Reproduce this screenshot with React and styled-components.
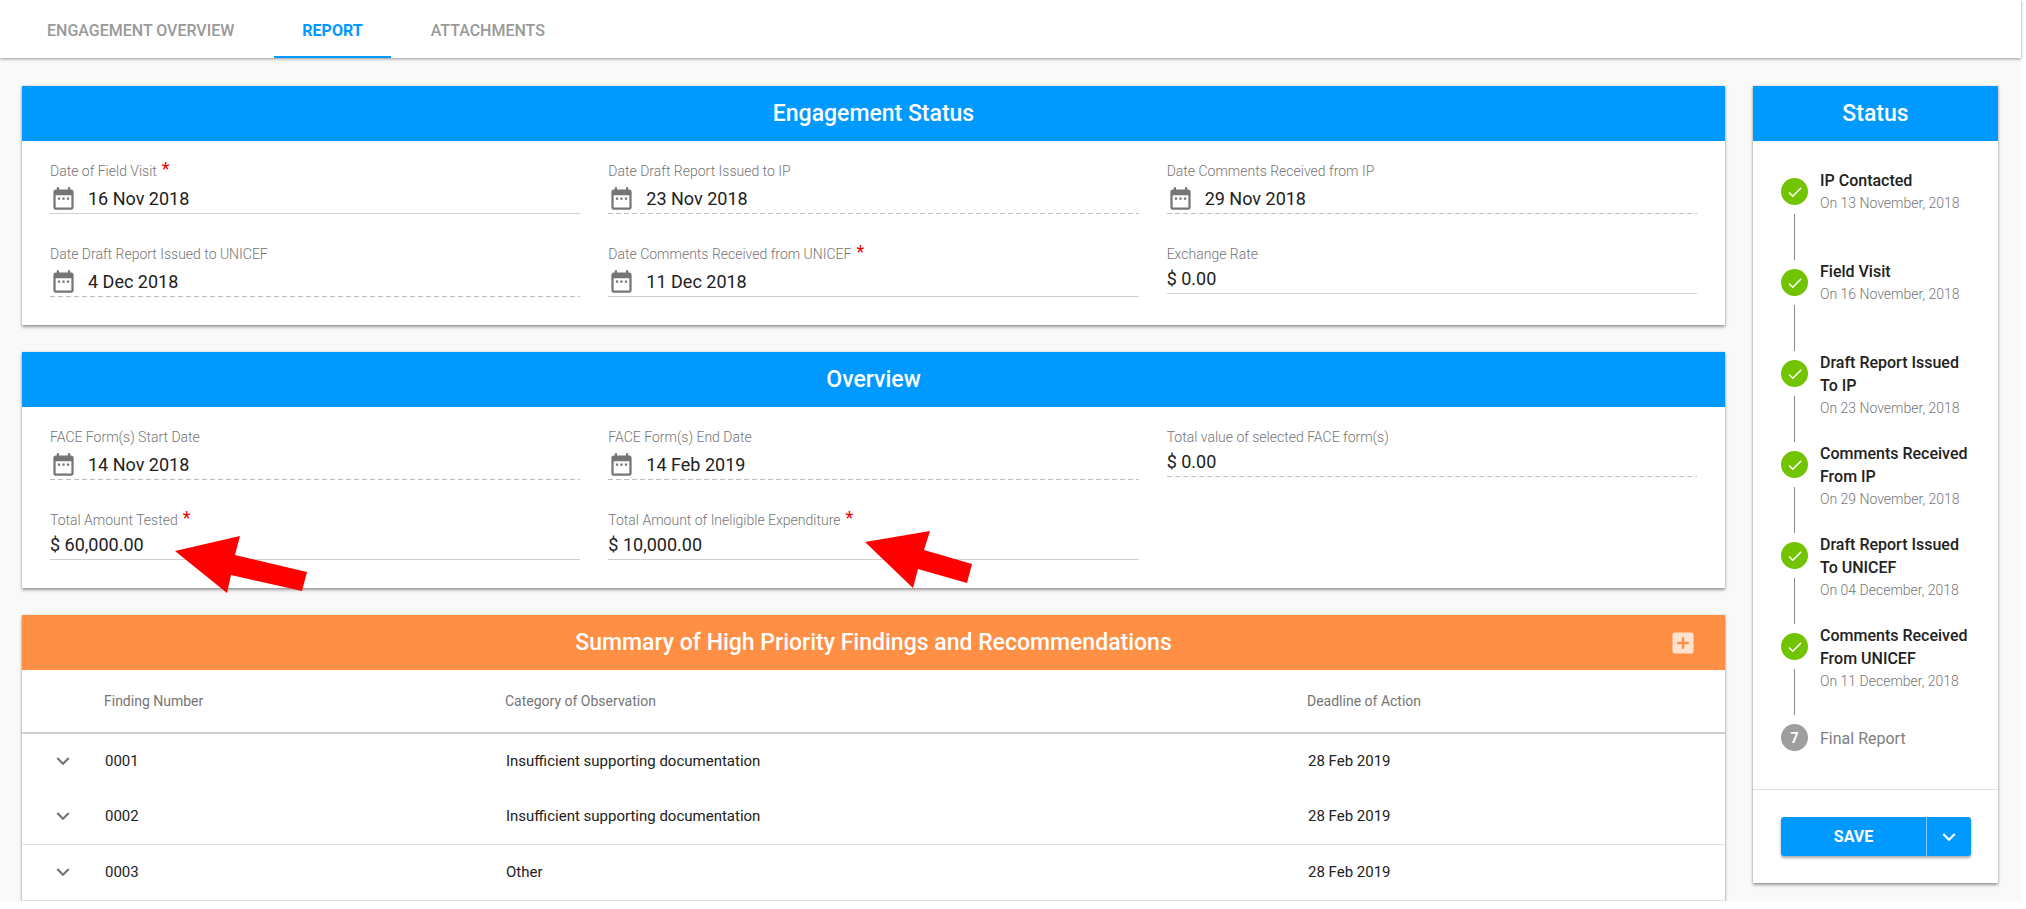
import React from 'react';
import styled, { createGlobalStyle, css } from 'styled-components';
import { MdAddBox, MdCheck, MdDateRange, MdExpandMore } from 'react-icons/md';

const blue = '#0099ff';
const orange = '#ff8f45';
const green = '#72c300';
const ink = '#212121';
const muted = '#757575';
const rule = '#d0d0d0';

const GlobalStyle = createGlobalStyle`
  *, *::before, *::after { box-sizing: border-box; }
  body {
    margin: 0;
    background: #fff;
    color: ${ink};
    font-family: Roboto, "Liberation Sans", sans-serif;
    font-size: 15px;
  }
  button, input { font: inherit; color: inherit; }
`;

const Page = styled.div`
  margin-right: 5px;
  background: #f9f9f9;
`;

const TabBar = styled.nav`
  display: flex;
  gap: 12px;
  height: 58px;
  padding-left: 19px;
  background: #fff;
  box-shadow: 0 1px 3px rgba(0, 0, 0, 0.4);
`;

const Tab = styled.a`
  display: flex;
  align-items: center;
  padding: 4px 28px 0;
  border-bottom: 2px solid ${(p) => (p.$active ? blue : 'transparent')};
  color: ${(p) => (p.$active ? blue : '#999')};
  font-size: 16px;
  font-weight: ${(p) => (p.$active ? 700 : 500)};
  text-decoration: none;
`;

const Content = styled.div`
  display: grid;
  grid-template-columns: minmax(0, 1fr) 245px;
  align-items: start;
  gap: 28px;
  padding: 28px 23px 0 22px;
`;

const Main = styled.main`
  display: flex;
  flex-direction: column;
  gap: 27px;
`;

const Card = styled.section`
  background: #fff;
  box-shadow: 0 2px 3px rgba(0, 0, 0, 0.38), 0 0 2px rgba(0, 0, 0, 0.15);
`;

const CardHeader = styled.header`
  display: grid;
  grid-template-columns: 1fr auto 1fr;
  align-items: center;
  height: 55px;
  padding: 0 28px;
  background: ${(p) => (p.$tone === 'orange' ? orange : blue)};
  color: #fff;
`;

const CardTitle = styled.h2`
  grid-column: 2;
  margin: 0;
  font-size: 23px;
  font-weight: 500;
  line-height: 28px;
`;

const AddButton = styled.button`
  display: flex;
  justify-self: end;
  padding: 0;
  border: 0;
  background: none;
  color: rgba(255, 255, 255, 0.75);
  cursor: pointer;
`;

const FieldGrid = styled.div`
  display: grid;
  grid-template-columns: repeat(3, minmax(0, 1fr));
  align-items: start;
  gap: 30px 28px;
  padding: 20px 28px 28px;
`;

const FieldBox = styled.div`
  position: relative;
`;

const FieldLabel = styled.label`
  display: flex;
  gap: 5px;
  height: 20px;
  color: ${muted};
  font-size: 14px;
  font-weight: 300;
  line-height: 20px;
  white-space: nowrap;
`;

const Required = styled.span`
  color: #e00;
  font-size: 18px;
  font-weight: 400;
  line-height: 16px;
`;

const dashes = css`
  background-image: repeating-linear-gradient(90deg, #bdbdbd 0 5px, transparent 5px 8px);
`;

const FieldValue = styled.div`
  display: flex;
  align-items: center;
  gap: 11px;
  height: ${(p) => (p.$date ? 33 : 30)}px;
  padding-top: ${(p) => (p.$date ? 2 : 0)}px;
  padding-bottom: 1px;
  background: linear-gradient(${rule}, ${rule}) no-repeat left bottom / 100% 1px;
  ${(p) => p.$readOnly && dashes}
  svg { flex: none; color: #757575; }
`;

const Input = styled.input`
  flex: 1;
  min-width: 0;
  height: 28px;
  padding: 0;
  border: 0;
  outline: 0;
  background: none;
  font-size: 18px;
`;

const Pointer = styled.svg`
  position: absolute;
  left: ${(p) => p.$left}px;
  top: ${(p) => p.$top}px;
  fill: #fe0000;
`;

const Table = styled.table`
  width: 100%;
  table-layout: fixed;
  border-collapse: separate;
  border-spacing: 0;
`;

const Th = styled.th`
  width: ${(p) => p.$width || 'auto'};
  height: 64px;
  padding: 0;
  border-bottom: 2px solid ${rule};
  color: #757575;
  font-size: 14px;
  font-weight: 400;
  text-align: left;
`;

const Row = styled.tr`
  td {
    height: ${(p) => (p.$ruled ? 56 : 55)}px;
    padding: 0 0 2px 1px;
    border-bottom: ${(p) => (p.$ruled ? '1px solid #e2e2e2' : '0')};
  }
`;

const ExpandButton = styled.button`
  display: flex;
  margin-left: 27px;
  padding: 0;
  border: 0;
  background: none;
  color: #757575;
  cursor: pointer;
`;

const Steps = styled.ol`
  margin: 0;
  padding: 28px 24px 28px 28px;
  list-style: none;
`;

const Step = styled.li`
  display: flex;
  gap: 12px;
  height: ${(p) => (p.$last ? 46 : 91)}px;
`;

const Marker = styled.div`
  display: flex;
  flex-direction: column;
  align-items: center;
  gap: 9px;
  padding-top: 9px;
`;

const Dot = styled.span`
  display: flex;
  align-items: center;
  justify-content: center;
  width: 27px;
  height: 27px;
  border-radius: 50%;
  background: ${(p) => (p.$done ? green : '#9e9e9e')};
  color: #fff;
  font-size: 14px;
  font-weight: 700;
`;

const Connector = styled.span`
  width: 1px;
  height: 46px;
  background: #888;
`;

const StepText = styled.div`
  align-self: ${(p) => (p.$done ? 'flex-start' : 'center')};
  color: ${(p) => (p.$done ? ink : '#808080')};
  font-size: 16px;
  font-weight: ${(p) => (p.$done ? 500 : 400)};
  line-height: 23px;
`;

const StepDate = styled.div`
  color: ${muted};
  font-size: 14px;
  font-weight: 300;
`;

const Actions = styled.footer`
  padding: 27px 27px 27px 28px;
  border-top: 1px solid #e0e0e0;
`;

const SplitButton = styled.div`
  display: flex;
  height: 39px;
  border-radius: 3px;
  background: ${blue};
  box-shadow: 0 2px 3px rgba(0, 0, 0, 0.35);
`;

const SaveButton = styled.button`
  flex: 1;
  border: 0;
  background: none;
  color: #fff;
  font-size: 16px;
  font-weight: 700;
  cursor: pointer;
`;

const MenuButton = styled.button`
  display: flex;
  align-items: center;
  justify-content: center;
  width: 45px;
  padding: 0;
  border: 0;
  border-left: 1px solid #80ccff;
  background: none;
  color: #fff;
  cursor: pointer;
`;

const tabs = ['ENGAGEMENT OVERVIEW', 'REPORT', 'ATTACHMENTS'];

const engagementFields = [
  { id: 'field-visit', label: 'Date of Field Visit', value: '16 Nov 2018', date: true, required: true },
  { id: 'draft-ip', label: 'Date Draft Report Issued to IP', value: '23 Nov 2018', date: true, readOnly: true },
  { id: 'comments-ip', label: 'Date Comments Received from IP', value: '29 Nov 2018', date: true, readOnly: true },
  { id: 'draft-unicef', label: 'Date Draft Report Issued to UNICEF', value: '4 Dec 2018', date: true, readOnly: true },
  { id: 'comments-unicef', label: 'Date Comments Received from UNICEF', value: '11 Dec 2018', date: true, required: true },
  { id: 'exchange-rate', label: 'Exchange Rate', value: '$ 0.00' },
];

const overviewFields = [
  { id: 'face-start', label: 'FACE Form(s) Start Date', value: '14 Nov 2018', date: true, readOnly: true },
  { id: 'face-end', label: 'FACE Form(s) End Date', value: '14 Feb 2019', date: true, readOnly: true },
  { id: 'face-total', label: 'Total value of selected FACE form(s)', value: '$ 0.00', readOnly: true },
  {
    id: 'tested', label: 'Total Amount Tested', value: '$ 60,000.00', required: true,
    pointer: { left: 125, top: 25, width: 132, height: 58, points: '0,16 65,1 60,20 132,37 127,56 56,40 52,58' },
  },
  {
    id: 'ineligible', label: 'Total Amount of Ineligible Expenditure', value: '$ 10,000.00', required: true,
    pointer: { left: 257, top: 21, width: 108, height: 57, points: '0,11 65,0 59,19 107,33 102,52 53,38 48,57' },
  },
];

const findings = [
  { number: '0001', category: 'Insufficient supporting documentation', deadline: '28 Feb 2019' },
  { number: '0002', category: 'Insufficient supporting documentation', deadline: '28 Feb 2019', ruled: true },
  { number: '0003', category: 'Other', deadline: '28 Feb 2019', ruled: true },
];

const steps = [
  { title: 'IP Contacted', date: 'On 13 November, 2018' },
  { title: 'Field Visit', date: 'On 16 November, 2018' },
  { title: 'Draft Report Issued To IP', date: 'On 23 November, 2018' },
  { title: 'Comments Received From IP', date: 'On 29 November, 2018' },
  { title: 'Draft Report Issued To UNICEF', date: 'On 04 December, 2018' },
  { title: 'Comments Received From UNICEF', date: 'On 11 December, 2018' },
  { title: 'Final Report' },
];

function Field({ id, label, value, date, readOnly, required, pointer }) {
  return (
    <FieldBox>
      <FieldLabel htmlFor={id}>
        {label}
        {required && <Required>*</Required>}
      </FieldLabel>
      <FieldValue $date={date} $readOnly={readOnly}>
        {date && <MdDateRange size={27} />}
        <Input id={id} type="text" defaultValue={value} readOnly={readOnly} />
      </FieldValue>
      {pointer && (
        <Pointer $left={pointer.left} $top={pointer.top} width={pointer.width} height={pointer.height} aria-hidden="true">
          <polygon points={pointer.points} />
        </Pointer>
      )}
    </FieldBox>
  );
}

function FieldCard({ title, fields }) {
  return (
    <Card>
      <CardHeader>
        <CardTitle>{title}</CardTitle>
      </CardHeader>
      <FieldGrid>
        {fields.map((f) => <Field key={f.id} {...f} />)}
      </FieldGrid>
    </Card>
  );
}

export default function App() {
  return (
    <>
      <GlobalStyle />
      <Page>
        <TabBar>
          {tabs.map((t) => (
            <Tab key={t} href="#" $active={t === 'REPORT'}>{t}</Tab>
          ))}
        </TabBar>
        <Content>
          <Main>
            <FieldCard title="Engagement Status" fields={engagementFields} />
            <FieldCard title="Overview" fields={overviewFields} />
            <Card>
              <CardHeader $tone="orange">
                <CardTitle>Summary of High Priority Findings and Recommendations</CardTitle>
                <AddButton type="button" aria-label="Add finding"><MdAddBox size={28} /></AddButton>
              </CardHeader>
              <Table>
                <thead>
                  <tr>
                    <Th $width="82px" aria-label="Expand" />
                    <Th $width="401px">Finding Number</Th>
                    <Th>Category of Observation</Th>
                    <Th $width="418px">Deadline of Action</Th>
                  </tr>
                </thead>
                <tbody>
                  {findings.map((f) => (
                    <Row key={f.number} $ruled={f.ruled}>
                      <td>
                        <ExpandButton type="button" aria-label={`Expand ${f.number}`}>
                          <MdExpandMore size={26} />
                        </ExpandButton>
                      </td>
                      <td>{f.number}</td>
                      <td>{f.category}</td>
                      <td>{f.deadline}</td>
                    </Row>
                  ))}
                </tbody>
              </Table>
            </Card>
          </Main>
          <Card as="aside">
            <CardHeader>
              <CardTitle>Status</CardTitle>
            </CardHeader>
            <Steps>
              {steps.map((s, i) => {
                const last = i === steps.length - 1;
                return (
                  <Step key={s.title} $last={last}>
                    <Marker>
                      <Dot $done={!last}>{last ? i + 1 : <MdCheck size={18} />}</Dot>
                      {!last && <Connector />}
                    </Marker>
                    <StepText $done={!last}>
                      {s.title}
                      {s.date && <StepDate>{s.date}</StepDate>}
                    </StepText>
                  </Step>
                );
              })}
            </Steps>
            <Actions>
              <SplitButton>
                <SaveButton type="button">SAVE</SaveButton>
                <MenuButton type="button" aria-label="More save options"><MdExpandMore size={26} /></MenuButton>
              </SplitButton>
            </Actions>
          </Card>
        </Content>
      </Page>
    </>
  );
}
